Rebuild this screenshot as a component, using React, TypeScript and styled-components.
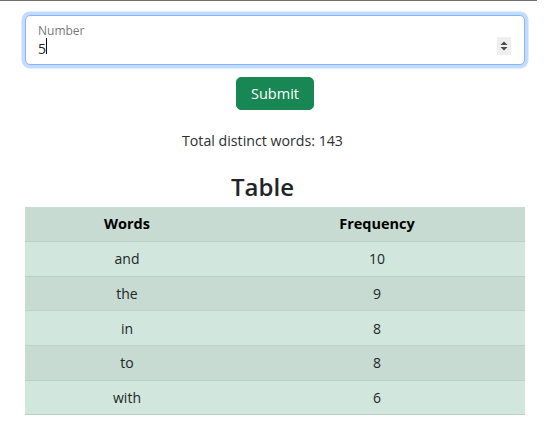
import React from "react";
import styled, { createGlobalStyle } from "styled-components";

const Global = createGlobalStyle`
  html, body { margin: 0; padding: 0; background: #fff; }
  body {
    font-family: "Open Sans", "Noto Sans", "Liberation Sans", sans-serif;
    font-size: 14px;
    line-height: 1.5;
    color: #212529;
  }
  * { box-sizing: border-box; }
`;

const TopRule = styled.div`
  width: 537px;
  height: 1px;
  background: #6e6e6e;
`;

const Page = styled.main`
  padding: 14px 24px 0 25px;
  display: flex;
  flex-direction: column;
  align-items: stretch;
`;

const Field = styled.div`
  position: relative;
  height: 50px;
`;

const Input = styled.input`
  width: 100%;
  height: 50px;
  border: 1px solid #86b7fe;
  border-radius: 5px;
  box-shadow: 0 0 0 3.5px rgba(13, 110, 253, 0.25);
  padding: 22px 11px 5px 12px;
  font: inherit;
  font-size: 14px;
  line-height: 21px;
  color: #212529;
  outline: none;
  background: #fff;
  -moz-appearance: textfield;
  &::-webkit-inner-spin-button,
  &::-webkit-outer-spin-button {
    -webkit-appearance: none;
    margin: 0;
  }
`;

const FloatLabel = styled.label`
  position: absolute;
  left: 13px;
  top: 9px;
  font-size: 12px;
  line-height: 14px;
  color: rgba(33, 37, 41, 0.65);
  pointer-events: none;
`;

const Caret = styled.span`
  position: absolute;
  left: 21px;
  top: 23px;
  width: 1px;
  height: 16px;
  background: #111;
`;

const Spinner = styled.div`
  position: absolute;
  right: 14px;
  top: 22px;
  width: 14px;
  height: 18px;
  background: #efefef;
  display: flex;
  align-items: center;
  justify-content: center;
`;

const SubmitButton = styled.button`
  align-self: center;
  margin-top: 12px;
  height: 33px;
  padding: 0 14px;
  border: 1px solid #198754;
  border-radius: 5px;
  background: #198754;
  color: #fff;
  font: inherit;
  font-size: 14.5px;
  line-height: 21px;
  cursor: pointer;
`;

const Summary = styled.p`
  margin: 20px 0 0;
  padding-right: 25px;
  text-align: center;
  line-height: 21px;
  font-size: 14.2px;
  color: #2b2f33;
`;

const Heading = styled.h3`
  margin: 21px 0 6px;
  padding-right: 25px;
  text-align: center;
  font-size: 24px;
  font-weight: 600;
  line-height: 29px;
  color: #212529;
`;

const Table = styled.table`
  width: 500px;
  border-collapse: collapse;
  table-layout: fixed;
`;

const Row = styled.tr<{ $shade: boolean }>`
  height: 34.67px;
  background: ${(p) => (p.$shade ? "#c7dbd2" : "#d1e7dd")};
`;

const HeadCell = styled.th<{ $w: number }>`
  width: ${(p) => p.$w}px;
  padding: 6px 7px;
  text-align: center;
  font-weight: 700;
  font-size: 14.5px;
  color: #000;
  border-bottom: 1px solid #bcd0c7;
`;

const Cell = styled.td`
  padding: 6px 7px;
  text-align: center;
  color: #212529;
  border-bottom: 1px solid #bcd0c7;
`;

const data: [string, number][] = [
  ["and", 10],
  ["the", 9],
  ["in", 8],
  ["to", 8],
  ["with", 6],
];

export default function App() {
  return (
    <>
      <Global />
      <TopRule />
      <Page>
        <Field>
          <Input id="num" type="number" defaultValue={5} />
          <FloatLabel htmlFor="num">Number</FloatLabel>
          <Caret />
          <Spinner>
            <svg width="8" height="12" viewBox="0 0 8 12">
              <path d="M4 1.5 L7.5 5 L0.5 5 Z" fill="#4a4a4a" />
              <path d="M0.5 7 L7.5 7 L4 10.5 Z" fill="#4a4a4a" />
            </svg>
          </Spinner>
        </Field>
        <SubmitButton type="button">Submit</SubmitButton>
        <Summary>Total distinct words: 143</Summary>
        <Heading>Table</Heading>
        <Table>
          <thead>
            <Row $shade>
              <HeadCell $w={204}>Words</HeadCell>
              <HeadCell $w={296}>Frequency</HeadCell>
            </Row>
          </thead>
          <tbody>
            {data.map(([w, f], i) => (
              <Row key={w} $shade={i % 2 === 1}>
                <Cell>{w}</Cell>
                <Cell>{f}</Cell>
              </Row>
            ))}
          </tbody>
        </Table>
      </Page>
    </>
  );
}
